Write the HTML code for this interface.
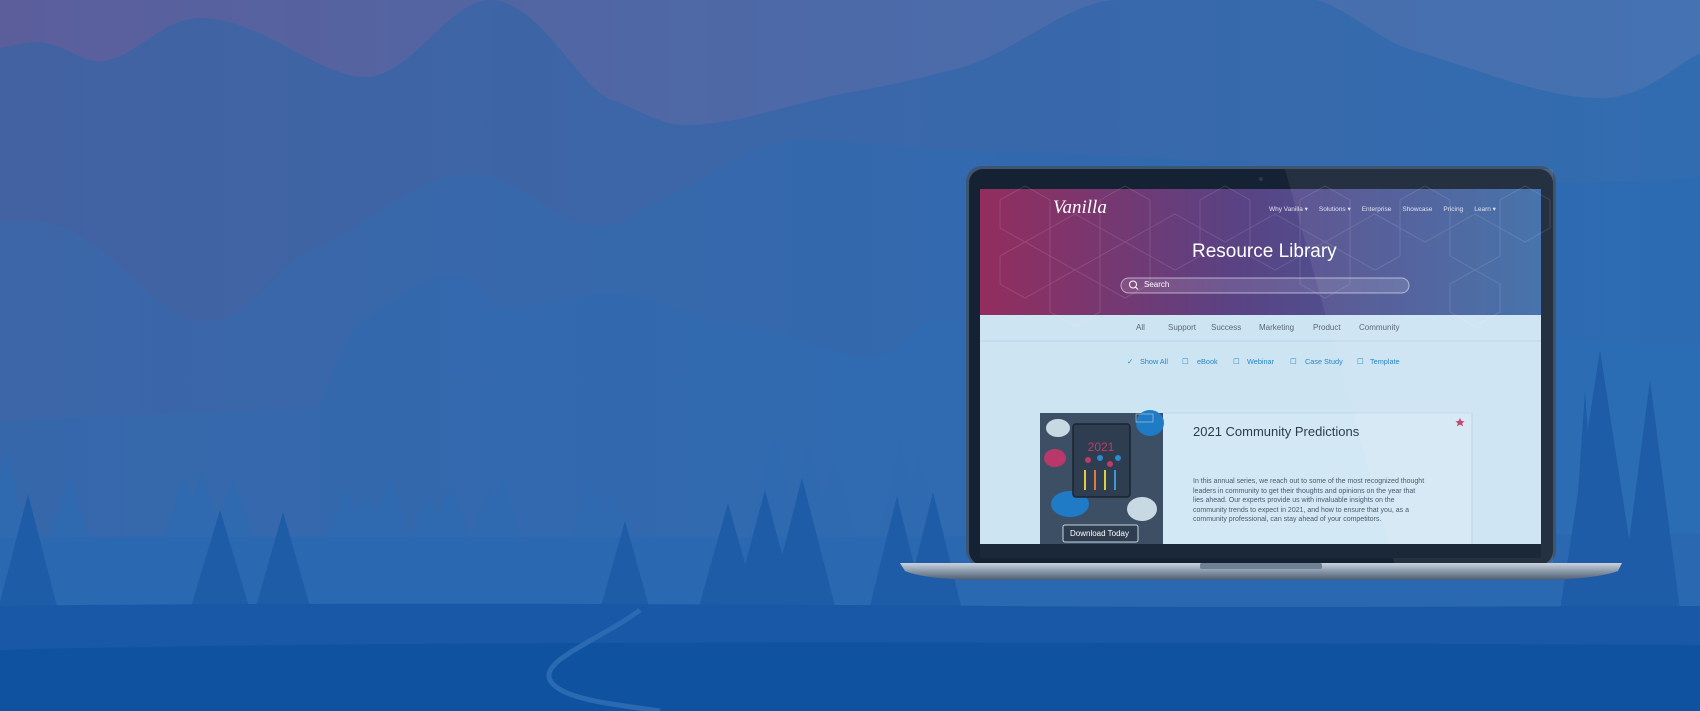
<!DOCTYPE html>
<html><head><meta charset="utf-8"><style>
*{margin:0;padding:0;box-sizing:border-box}
body{width:1700px;height:711px;overflow:hidden;position:relative;font-family:"Liberation Sans",sans-serif;background:#2a62ad}
.abs{position:absolute}
.t{position:absolute;white-space:nowrap}
.nav span{margin-right:11px}
.tabs span{position:absolute}
</style></head><body>
<svg class="abs" style="left:0;top:0" width="1700" height="711" viewBox="0 0 1700 711">
<defs>
<linearGradient id="sky" x1="0" y1="0" x2="1" y2="0"><stop offset="0" stop-color="#5c5e9c"/><stop offset="0.5" stop-color="#4c6aa8"/><stop offset="1" stop-color="#4472b2"/></linearGradient>
<linearGradient id="hdr" x1="0" y1="0" x2="1" y2="0"><stop offset="0" stop-color="#932d5e"/><stop offset="0.45" stop-color="#5a4283"/><stop offset="1" stop-color="#3a6aa6"/></linearGradient>
<linearGradient id="base" x1="0" y1="0" x2="0" y2="1"><stop offset="0" stop-color="#c9d3de"/><stop offset="0.5" stop-color="#8797a8"/><stop offset="1" stop-color="#4d5d70"/></linearGradient>
<linearGradient id="l1" x1="0" y1="0" x2="1" y2="0"><stop offset="0" stop-color="#4262a2"/><stop offset="1" stop-color="#326cb0"/></linearGradient>
<linearGradient id="l2" x1="0" y1="0" x2="1" y2="0"><stop offset="0" stop-color="#3c66a8"/><stop offset="1" stop-color="#2c6bb2"/></linearGradient>
<linearGradient id="l3" x1="0" y1="0" x2="1" y2="0"><stop offset="0" stop-color="#3767ab"/><stop offset="1" stop-color="#2a6db4"/></linearGradient>
</defs>
<rect width="1700" height="711" fill="url(#sky)"/>
<path d="M0 48 C20 44 35 40 46 43 C70 48 85 64 104 61 C140 55 160 18 202 18 C260 18 320 78 367 77 C410 76 450 0 490 0 C540 0 580 90 612 100 C640 110 660 125 685 125 C740 125 800 100 857 91 C900 84 930 75 960 68 C1020 50 1070 0 1117 0 L1317 0 C1350 10 1380 40 1409 49 C1480 70 1550 100 1604 98 C1650 96 1680 60 1700 54 L1700 711 L0 711Z" fill="url(#l1)"/>
<path d="M0 222 C30 220 45 222 61 226 C120 250 160 322 202 322 C250 322 270 270 306 254 C360 230 420 174 465 174 C520 174 560 227 594 227 C630 227 650 200 673 195 C720 170 760 140 796 140 C860 140 920 150 960 150 C1100 150 1300 170 1450 180 C1550 186 1650 180 1700 178 L1700 711 L0 711Z" fill="url(#l2)"/>
<path d="M0 420 C150 415 250 412 318 408 C330 380 345 330 367 317 C400 295 430 274 453 274 C480 274 485 308 502 308 C540 308 570 294 612 294 C660 294 700 326 734 326 C790 330 840 358 869 358 C900 358 915 319 936 319 C950 319 955 326 960 326 C1100 330 1300 330 1450 335 C1560 338 1650 345 1700 345 L1700 711 L0 711Z" fill="url(#l3)"/>
<g fill="#2f6ab0">
<path d="M6 450 L28 540 L-16 540Z M69 476 L90 540 L48 540Z M184 476 L205 540 L163 540Z M202 470 L223 540 L181 540Z M233 480 L254 540 L212 540Z M346 486 L367 540 L325 540Z M367 492 L388 540 L346 540Z M389 478 L410 540 L368 540Z M428 498 L447 540 L409 540Z M450 484 L471 540 L429 540Z M490 486 L510 540 L470 540Z M502 480 L522 540 L482 540Z M591 480 L612 540 L570 540Z M612 490 L633 540 L591 540Z M774 434 L800 540 L748 540Z M808 444 L832 540 L784 540Z M835 458 L857 540 L813 540Z M900 440 L922 540 L878 540Z M918 455 L940 540 L896 540Z"/>
</g>
<path d="M0 538 C300 535 700 540 1000 536 C1300 532 1500 536 1700 534 L1700 711 L0 711Z" fill="#2a68b2"/>
<g fill="#1f5ca8">
<path d="M28 494 L58 610 L-2 610Z M220 510 L250 610 L190 610Z M283 512 L311 610 L255 610Z M625 521 L650 610 L600 610Z M728 503 L758 610 L698 610Z M765 490 L797 610 L733 610Z M802 478 L836 610 L768 610Z M897 496 L925 610 L869 610Z M933 492 L962 610 L904 610Z M1600 350 L1640 610 L1560 610Z M1650 380 L1680 610 L1620 610Z M1585 390 L1600 610 L1570 610Z"/>
</g>
<path d="M0 606 C300 602 700 604 1000 606 C1300 608 1500 606 1700 606 L1700 711 L0 711Z" fill="#1858a6"/>
<path d="M0 650 C400 640 1000 642 1700 645 L1700 711 L0 711Z" fill="#0f52a0"/>
<path d="M640 610 C600 640 540 660 550 680 C560 700 620 705 660 711" fill="none" stroke="#2a6ab2" stroke-width="5"/>
<!-- laptop lid -->
<rect x="966" y="166" width="590" height="400" rx="16" fill="#3e5570"/>
<rect x="969" y="169" width="584" height="396" rx="14" fill="#152233"/>
<circle cx="1261" cy="179" r="2" fill="#2a3a4c"/>
<rect x="980" y="189" width="561" height="355" fill="#cde4f3"/>
<rect x="980" y="189" width="561" height="126" fill="url(#hdr)"/>
<g fill="none" stroke="#ffffff" stroke-opacity="0.12" stroke-width="1">
<path d="M1000 200 l25 -14 25 14 v28 l-25 14 -25 -14z M1050 228 l25 -14 25 14 v28 l-25 14 -25 -14z M1100 200 l25 -14 25 14 v28 l-25 14 -25 -14z M1000 256 l25 -14 25 14 v28 l-25 14 -25 -14z M1150 228 l25 -14 25 14 v28 l-25 14 -25 -14z M1200 200 l25 -14 25 14 v28 l-25 14 -25 -14z M1250 228 l25 -14 25 14 v28 l-25 14 -25 -14z M1300 200 l25 -14 25 14 v28 l-25 14 -25 -14z M1350 228 l25 -14 25 14 v28 l-25 14 -25 -14z M1400 200 l25 -14 25 14 v28 l-25 14 -25 -14z M1450 228 l25 -14 25 14 v28 l-25 14 -25 -14z M1500 200 l25 -14 25 14 v28 l-25 14 -25 -14z M1100 256 l25 -14 25 14 v28 l-25 14 -25 -14z M1300 256 l25 -14 25 14 v28 l-25 14 -25 -14z M1450 284 l25 -14 25 14 v28 l-25 14 -25 -14z M1050 284 l25 -14 25 14 v28 l-25 14 -25 -14z"/>
</g>
<line x1="980" y1="341" x2="1541" y2="341" stroke="#bcd4e4"/>
<rect x="1121" y="278" width="288" height="15" rx="7.5" fill="#ffffff" fill-opacity="0.12" stroke="#d8dcec" stroke-opacity="0.7"/>
<circle cx="1133" cy="284.5" r="3.5" fill="none" stroke="#fff" stroke-width="1"/><line x1="1135.5" y1="287" x2="1138" y2="289.5" stroke="#fff"/>
<!-- card -->
<rect x="1040" y="413" width="432" height="140" fill="#d3e8f5"/>
<line x1="1472" y1="413" x2="1472" y2="544" stroke="#b9d0e0"/>
<line x1="1163" y1="413" x2="1472" y2="413" stroke="#c2d8e7"/>
<rect x="1040" y="413" width="123" height="131" fill="#3d4f64"/>
<ellipse cx="1058" cy="428" rx="12" ry="9" fill="#c9d9e4"/><ellipse cx="1150" cy="423" rx="14" ry="13" fill="#1f7bc6"/>
<rect x="1136" y="414" width="17" height="8" fill="none" stroke="#bcd" stroke-width="0.6"/>
<ellipse cx="1055" cy="458" rx="11" ry="9" fill="#b8386a"/>
<ellipse cx="1070" cy="504" rx="19" ry="13" fill="#1f7bc6"/>
<ellipse cx="1142" cy="509" rx="15" ry="12" fill="#c9d9e4"/>
<rect x="1073" y="424" width="57" height="73" rx="3" fill="#2e3d50" stroke="#1a2430" stroke-width="1.5"/>
<text x="1101" y="451" font-size="12" fill="#c03a6a" text-anchor="middle" font-family="Liberation Sans">2021</text>
<g fill="#c03a6a"><circle cx="1088" cy="460" r="3"/><circle cx="1110" cy="464" r="3"/></g>
<g fill="#2c8ad0"><circle cx="1100" cy="458" r="3"/><circle cx="1118" cy="458" r="3"/></g>
<g stroke-width="2"><line x1="1085" y1="470" x2="1085" y2="490" stroke="#e8c840"/><line x1="1095" y1="470" x2="1095" y2="490" stroke="#e07a40"/><line x1="1105" y1="470" x2="1105" y2="490" stroke="#d8d040"/><line x1="1115" y1="470" x2="1115" y2="490" stroke="#3a9ad8"/></g>
<rect x="1063" y="525" width="75" height="17" rx="2" fill="#2e3d50" stroke="#c8d4de" stroke-width="1"/>
<path d="M1460 418 l1.5 3 3 .3 -2.3 2 .8 3 -3 -1.7 -3 1.7 .8 -3 -2.3 -2 3 -.3z" fill="#c03a6a"/>
<!-- glare -->
<path d="M1285 169 L1553 169 L1553 565 L1395 565Z" fill="#ffffff" fill-opacity="0.07"/>
<rect x="980" y="544" width="561" height="14" fill="#1a2838"/>
<!-- base -->
<path d="M900 563 L1622 563 L1618 571 C1600 578 1560 580 1540 580 L980 580 C960 580 920 578 905 571Z" fill="url(#base)"/>
<rect x="1200" y="563" width="122" height="6" rx="2" fill="#6f8194"/>
</svg>
<div class="t" style="left:1053px;top:197px;color:#fff;font-family:'Liberation Serif',serif;font-style:italic;font-size:19px">Vanilla</div>
<div class="t nav" style="left:1269px;top:205px;color:#e0e4f0;font-size:6.5px"><span>Why Vanilla ▾</span><span>Solutions ▾</span><span>Enterprise</span><span>Showcase</span><span>Pricing</span><span>Learn ▾</span></div>
<div class="t" style="left:1192px;top:241px;color:#fff;font-size:19px">Resource Library</div>
<div class="t" style="left:1144px;top:280px;color:#fff;font-size:8px">Search</div>
<div class="t tabs" style="left:0;top:323px;color:#5a6878;font-size:8px"><span style="left:1136px">All</span><span style="left:1168px">Support</span><span style="left:1211px">Success</span><span style="left:1259px">Marketing</span><span style="left:1313px">Product</span><span style="left:1359px">Community</span></div>
<div class="t tabs" style="left:0;top:357px;color:#2a86c6;font-size:7.3px"><span style="left:1127px">✓</span><span style="left:1140px">Show All</span><span style="left:1182px">☐</span><span style="left:1197px">eBook</span><span style="left:1233px">☐</span><span style="left:1247px">Webinar</span><span style="left:1290px">☐</span><span style="left:1305px">Case Study</span><span style="left:1357px">☐</span><span style="left:1370px">Template</span></div>
<div class="t" style="left:1193px;top:424px;color:#2c3c4c;font-size:13px">2021 Community Predictions</div>
<div class="t" style="left:1193px;top:477px;color:#4a5a6a;font-size:7px;line-height:9.5px">In this annual series, we reach out to some of the most recognized thought<br>leaders in community to get their thoughts and opinions on the year that<br>lies ahead. Our experts provide us with invaluable insights on the<br>community trends to expect in 2021, and how to ensure that you, as a<br>community professional, can stay ahead of your competitors.</div>
<div class="t" style="left:1070px;top:529px;color:#fff;font-size:8px">Download Today</div>
</body></html>
